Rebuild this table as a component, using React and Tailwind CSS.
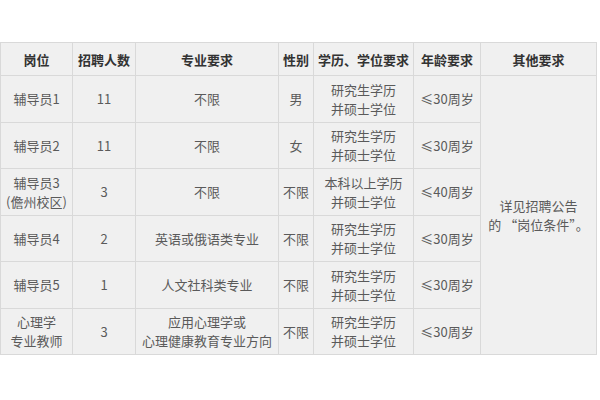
const rows = [
  { post: ["辅导员1"], count: "11", major: ["不限"], sex: "男", degree: ["研究生学历", "并硕士学位"], age: "≤30周岁" },
  { post: ["辅导员2"], count: "11", major: ["不限"], sex: "女", degree: ["研究生学历", "并硕士学位"], age: "≤30周岁" },
  { post: ["辅导员3", "(儋州校区)"], count: "3", major: ["不限"], sex: "不限", degree: ["本科以上学历", "并硕士学位"], age: "≤40周岁" },
  { post: ["辅导员4"], count: "2", major: ["英语或俄语类专业"], sex: "不限", degree: ["研究生学历", "并硕士学位"], age: "≤30周岁" },
  { post: ["辅导员5"], count: "1", major: ["人文社科类专业"], sex: "不限", degree: ["研究生学历", "并硕士学位"], age: "≤30周岁" },
  { post: ["心理学", "专业教师"], count: "3", major: ["应用心理学或", "心理健康教育专业方向"], sex: "不限", degree: ["研究生学历", "并硕士学位"], age: "≤30周岁" },
];

const Lines = ({ items }) => items.map((t, i) => <div key={i}>{t}</div>);

const cell = "border border-[#d9d9d9] text-center align-middle p-0";

export default function App() {
  return (
    <div
      className="w-[600px] h-[400px] bg-white pt-[42px]"
      style={{ fontFamily: '"Noto Sans CJK SC", "Noto Sans", sans-serif' }}
    >
      <table className="w-[596px] table-fixed border-collapse bg-[#f0f0f0] text-[13px] leading-[19px] text-[#5a5a5a]">
        <colgroup>
          <col className="w-[72px]" />
          <col className="w-[63px]" />
          <col className="w-[143px]" />
          <col className="w-[35px]" />
          <col className="w-[100px]" />
          <col className="w-[67px]" />
          <col className="w-[116px]" />
        </colgroup>
        <thead>
          <tr className="h-[33px] font-bold text-[#333]">
            <th className={cell}>岗位</th>
            <th className={cell}>招聘人数</th>
            <th className={cell}>专业要求</th>
            <th className={cell}>性别</th>
            <th className={cell}>学历、学位要求</th>
            <th className={cell}>年龄要求</th>
            <th className={cell}>其他要求</th>
          </tr>
        </thead>
        <tbody>
          {rows.map((r, i) => (
            <tr key={i} className="h-[46.5px]">
              <td className={cell}><Lines items={r.post} /></td>
              <td className={cell}>{r.count}</td>
              <td className={cell}><Lines items={r.major} /></td>
              <td className={cell}>{r.sex}</td>
              <td className={cell}><Lines items={r.degree} /></td>
              <td className={cell}>{r.age}</td>
              {i === 0 && (
                <td className={cell} rowSpan={6}>
                  <div>详见招聘公告</div>
                  <div>的 “岗位条件”。</div>
                </td>
              )}
            </tr>
          ))}
        </tbody>
      </table>
    </div>
  );
}
